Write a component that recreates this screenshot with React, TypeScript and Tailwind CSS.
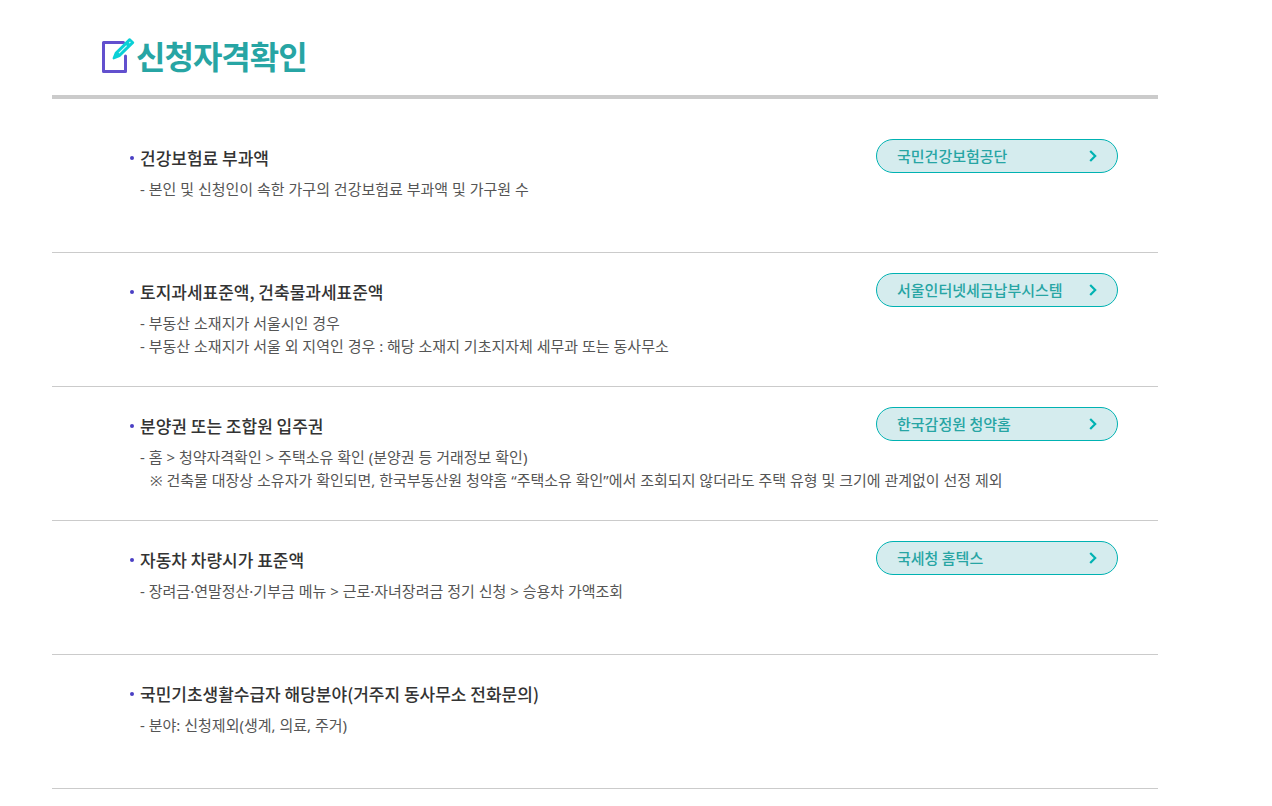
import type { ReactNode } from "react";

type QualificationItem = {
  title: string;
  details: { text: string; note?: boolean }[];
  link?: string;
};

const items: QualificationItem[] = [
  {
    title: "건강보험료 부과액",
    details: [{ text: "- 본인 및 신청인이 속한 가구의 건강보험료 부과액 및 가구원 수" }],
    link: "국민건강보험공단",
  },
  {
    title: "토지과세표준액, 건축물과세표준액",
    details: [
      { text: "- 부동산 소재지가 서울시인 경우" },
      { text: "- 부동산 소재지가 서울 외 지역인 경우 : 해당 소재지 기초지자체 세무과 또는 동사무소" },
    ],
    link: "서울인터넷세금납부시스템",
  },
  {
    title: "분양권 또는 조합원 입주권",
    details: [
      { text: "- 홈 > 청약자격확인 > 주택소유 확인 (분양권 등 거래정보 확인)" },
      {
        text: "※ 건축물 대장상 소유자가 확인되면, 한국부동산원 청약홈 “주택소유 확인”에서 조회되지 않더라도 주택 유형 및 크기에 관계없이 선정 제외",
        note: true,
      },
    ],
    link: "한국감정원 청약홈",
  },
  {
    title: "자동차 차량시가 표준액",
    details: [{ text: "- 장려금·연말정산·기부금 메뉴 > 근로·자녀장려금 정기 신청 > 승용차 가액조회" }],
    link: "국세청 홈텍스",
  },
  {
    title: "국민기초생활수급자 해당분야(거주지 동사무소 전화문의)",
    details: [{ text: "- 분야: 신청제외(생계, 의료, 주거)" }],
  },
];

function NoteIcon() {
  return (
    <svg width="34" height="36" viewBox="0 -1 34 36" fill="none" aria-hidden="true">
      <path
        d="M22.5 4.5H2.5V33.5H24.5V18"
        stroke="#6250ce"
        strokeWidth="3"
        strokeLinecap="round"
        strokeLinejoin="round"
      />
      <path
        d="M12.8 20.2L15 14.8L28.6 1.4L32 4.6L18.4 18Z"
        fill="#0ad0d6"
        stroke="#0ad0d6"
        strokeWidth="2.4"
        strokeLinejoin="round"
      />
      <path d="M18 15.2L25.6 7.6M28.2 5.1L29.4 3.9" stroke="#d8fafa" strokeWidth="1.2" />
    </svg>
  );
}

function LinkButton({ children }: { children: ReactNode }) {
  return (
    <a
      href="#"
      className="flex h-[34px] w-[242px] shrink-0 items-center justify-between rounded-full border border-[#00b2b2] bg-[#d5ecee] px-5 text-[15px] font-medium text-[#27a5a4]"
    >
      {children}
      <svg width="8" height="12" viewBox="0 0 8 12" fill="none" aria-hidden="true">
        <path d="M1.2 1L6.2 6L1.2 11" stroke="#00b2b2" strokeWidth="2.2" />
      </svg>
    </a>
  );
}

function QualificationRow({ title, details, link }: QualificationItem) {
  return (
    <li className="min-h-[134px] border-b border-[#cbcbcb] pt-5 pr-10 pb-5 pl-[78px]">
      <div className="flex min-h-[34px] items-start justify-between gap-6">
        <h2 className="flex items-center gap-1.5 pt-1.5 text-[17px] leading-[26px] font-medium text-[#333333]">
          <span className="size-1 rounded-full bg-[#4a3fc4]" />
          {title}
        </h2>
        {link ? <LinkButton>{link}</LinkButton> : null}
      </div>
      <div className="mt-[5px] pl-2.5 font-['Noto_Sans','Noto_Sans_CJK_KR',sans-serif] text-[15px] leading-[23px] text-[#555555]">
        {details.map(({ text, note }) => (
          <p key={text} className={note ? "pl-2.5" : undefined}>
            {text}
          </p>
        ))}
      </div>
    </li>
  );
}

export default function App() {
  return (
    <main className="min-h-screen bg-white pr-[114px] pl-[52px] font-['Noto_Sans_CJK_KR',sans-serif]">
      <header className="flex items-center gap-px border-b-4 border-[#cbcbcb] pt-[31px] pb-4 pl-[49px]">
        <NoteIcon />
        <h1 className="text-[32px] leading-[48px] font-bold tracking-[-1px] text-[#27a5a4]">
          신청자격확인
        </h1>
      </header>
      <ul className="pt-5 pb-4">
        {items.map((item) => (
          <QualificationRow key={item.title} {...item} />
        ))}
      </ul>
    </main>
  );
}
